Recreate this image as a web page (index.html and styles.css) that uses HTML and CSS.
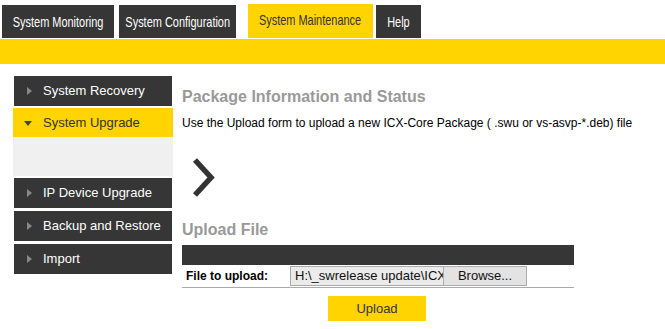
FILE: index.html
```html
<!DOCTYPE html>
<html lang="en">
<head>
    <meta charset="UTF-8">
    <link rel="stylesheet" href="styles.css">
    <title>System Maintenance</title>
</head>
<body>
    <nav class="tabs">
        <a class="tab tab-monitor" href="#"><span>System Monitoring</span></a>
        <a class="tab tab-config" href="#"><span>System Configuration</span></a>
        <a class="tab tab-maint active" href="#"><span>System Maintenance</span></a>
        <a class="tab tab-help" href="#"><span>Help</span></a>
    </nav>
    <div class="subbar"></div>

    <div class="main">
        <ul class="sidebar">
            <li class="side-item"><span class="arrow"></span>System Recovery</li>
            <li class="side-item open"><span class="arrow"></span>System Upgrade</li>
            <li class="side-panel"></li>
            <li class="side-item"><span class="arrow"></span>IP Device Upgrade</li>
            <li class="side-item"><span class="arrow"></span>Backup and Restore</li>
            <li class="side-item"><span class="arrow"></span>Import</li>
        </ul>

        <div class="content">
            <h2>Package Information and Status</h2>
            <p>Use the Upload form to upload a new ICX-Core Package ( .swu or vs-asvp-*.deb) file</p>
            <svg class="chevron" width="24" height="40" viewBox="0 0 24 40">
                <polyline points="3,2 19,19.5 3,37" fill="none" stroke="#333" stroke-width="5.5"/>
            </svg>

            <h2 class="upload-title">Upload File</h2>
            <div class="upload-box">
                <div class="upload-head"></div>
                <div class="upload-row">
                    <label>File to upload:</label>
                    <div class="file-field">
                        <span class="file-name">H:\_swrelease update\ICX</span>
                        <span class="browse">Browse...</span>
                    </div>
                </div>
            </div>
            <div class="actions">
                <button class="upload-btn">Upload</button>
            </div>
        </div>
    </div>
</body>
</html>
```

FILE: styles.css
```css
body {
    margin: 0;
    font-family: "Liberation Sans", Arial, sans-serif;
    font-size: 12px;
    color: #000;
    background-color: #fff;
}

.tabs {
    display: flex;
    align-items: flex-end;
    padding: 4px 0 0 2px;
    height: 34px;
}

.tab {
    display: flex;
    justify-content: center;
    align-items: center;
    height: 33px;
    white-space: nowrap;
    background-color: #363636;
    color: #fff;
    text-decoration: none;
    font-size: 15px;
}

/* the tab captions are drawn in a condensed face */
.tab span {
    display: inline-block;
    flex-shrink: 0;
    transform: scaleX(0.73);
}

.tab-monitor { width: 112px; margin-right: 5px; }
.tab-config { width: 117px; margin-right: 12px; }
.tab-maint { width: 125px; margin-right: 3px; }
.tab-help { width: 45px; }

.tab.active {
    height: 34px;
    padding-bottom: 3px;
    box-sizing: border-box;
    background-color: #ffd400;
    color: #333;
}

.subbar {
    height: 25px;
    margin-top: 1px;
    background-color: #ffd400;
}

.main {
    display: flex;
    padding-top: 12px;
}

.sidebar {
    list-style: none;
    margin: 0 0 0 13px;
    padding: 0;
    width: 160px;
}

.side-item {
    position: relative;
    height: 30px;
    line-height: 30px;
    margin: 0 1px 3px;
    padding-left: 29px;
    background-color: #363636;
    color: #fff;
    font-size: 13px;
}

.side-item .arrow {
    position: absolute;
    left: 13px;
    top: 11px;
    width: 0;
    height: 0;
    border-top: 4px solid transparent;
    border-bottom: 4px solid transparent;
    border-left: 5px solid #888;
}

.side-item.open {
    height: 29px;
    line-height: 29px;
    margin: -1px 0 0;
    padding-left: 30px;
    background-color: #ffd400;
    color: #333;
}

.side-item.open .arrow {
    left: 11px;
    top: 13px;
    border-left: 4px solid transparent;
    border-right: 4px solid transparent;
    border-top: 5px solid #444;
    border-bottom: 0;
}

.side-panel {
    height: 39px;
    margin-bottom: 2px;
    background-color: #f0f0f0;
}

.content {
    margin-left: 9px;
    flex: 1;
}

.content h2 {
    margin: 12px 0 0;
    font-size: 16px;
    color: #999;
    line-height: 18px;
}

.content p {
    margin: 10px 0 0;
    line-height: 14px;
}

.chevron {
    display: block;
    margin: 28px 0 0 10px;
}

.content .upload-title {
    margin-top: 23px;
}

.upload-box {
    width: 392px;
    margin-top: 6px;
    border-bottom: 1px solid #aaa;
}

.upload-head {
    height: 20px;
    background-color: #363636;
}

.upload-row {
    display: flex;
    align-items: center;
    height: 22px;
    padding-left: 4px;
}

.upload-row label {
    width: 104px;
    font-weight: bold;
    font-size: 12px;
}

.file-field {
    display: flex;
    height: 20px;
    line-height: 18px;
    font-size: 13px;
}

.file-name {
    width: 148px;
    padding-left: 4px;
    overflow: hidden;
    white-space: nowrap;
    background-color: #ebebeb;
    border: 1px solid #aaa;
    border-right: 0;
    color: #111;
}

.browse {
    width: 82px;
    text-align: center;
    background-color: #e3e3e3;
    border: 1px solid #adadad;
    color: #111;
}

.actions {
    width: 392px;
    display: flex;
    justify-content: center;
    margin-top: 8px;
}

.upload-btn {
    width: 98px;
    height: 25px;
    border: none;
    background-color: #ffd400;
    color: #333;
    font-family: "Liberation Sans", Arial, sans-serif;
    font-size: 13px;
    margin-right: 2px;
}
```
